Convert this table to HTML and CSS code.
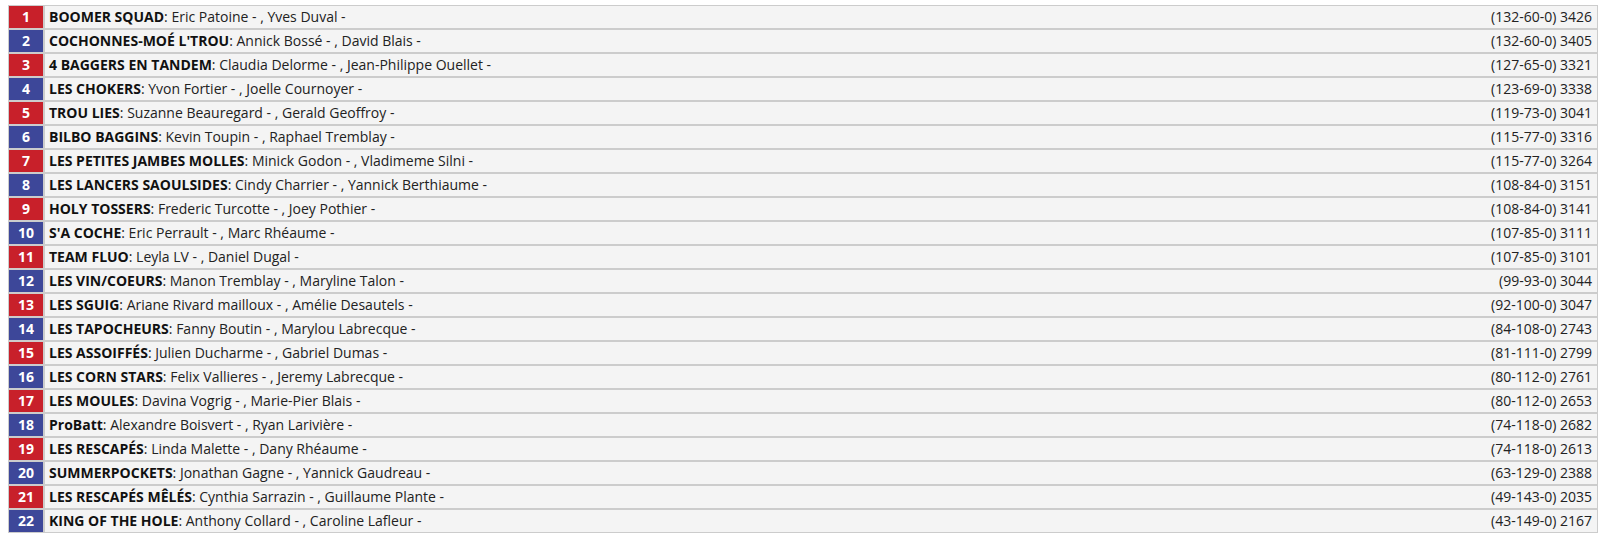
FILE: index.html
```html
<!DOCTYPE html>
<html lang="fr">
<head>
<meta charset="utf-8">
<title>Classement</title>
<link rel="stylesheet" href="styles.css">
</head>
<body>
<div class="board">
  <div class="row"><div class="rank odd">1</div><div class="info"><span class="team"><b>BOOMER SQUAD</b>: Eric Patoine - , Yves Duval -</span><span class="score">(132-60-0) 3426</span></div></div>
  <div class="row"><div class="rank even">2</div><div class="info"><span class="team"><b>COCHONNES-MOÉ L'TROU</b>: Annick Bossé - , David Blais -</span><span class="score">(132-60-0) 3405</span></div></div>
  <div class="row"><div class="rank odd">3</div><div class="info"><span class="team"><b>4 BAGGERS EN TANDEM</b>: Claudia Delorme - , Jean-Philippe Ouellet -</span><span class="score">(127-65-0) 3321</span></div></div>
  <div class="row"><div class="rank even">4</div><div class="info"><span class="team"><b>LES CHOKERS</b>: Yvon Fortier - , Joelle Cournoyer -</span><span class="score">(123-69-0) 3338</span></div></div>
  <div class="row"><div class="rank odd">5</div><div class="info"><span class="team"><b>TROU LIES</b>: Suzanne Beauregard - , Gerald Geoffroy -</span><span class="score">(119-73-0) 3041</span></div></div>
  <div class="row"><div class="rank even">6</div><div class="info"><span class="team"><b>BILBO BAGGINS</b>: Kevin Toupin - , Raphael Tremblay -</span><span class="score">(115-77-0) 3316</span></div></div>
  <div class="row"><div class="rank odd">7</div><div class="info"><span class="team"><b>LES PETITES JAMBES MOLLES</b>: Minick Godon - , Vladimeme Silni -</span><span class="score">(115-77-0) 3264</span></div></div>
  <div class="row"><div class="rank even">8</div><div class="info"><span class="team"><b>LES LANCERS SAOULSIDES</b>: Cindy Charrier - , Yannick Berthiaume -</span><span class="score">(108-84-0) 3151</span></div></div>
  <div class="row"><div class="rank odd">9</div><div class="info"><span class="team"><b>HOLY TOSSERS</b>: Frederic Turcotte - , Joey Pothier -</span><span class="score">(108-84-0) 3141</span></div></div>
  <div class="row"><div class="rank even">10</div><div class="info"><span class="team"><b>S'A COCHE</b>: Eric Perrault - , Marc Rhéaume -</span><span class="score">(107-85-0) 3111</span></div></div>
  <div class="row"><div class="rank odd">11</div><div class="info"><span class="team"><b>TEAM FLUO</b>: Leyla LV - , Daniel Dugal -</span><span class="score">(107-85-0) 3101</span></div></div>
  <div class="row"><div class="rank even">12</div><div class="info"><span class="team"><b>LES VIN/COEURS</b>: Manon Tremblay - , Maryline Talon -</span><span class="score">(99-93-0) 3044</span></div></div>
  <div class="row"><div class="rank odd">13</div><div class="info"><span class="team"><b>LES SGUIG</b>: Ariane Rivard mailloux - , Amélie Desautels -</span><span class="score">(92-100-0) 3047</span></div></div>
  <div class="row"><div class="rank even">14</div><div class="info"><span class="team"><b>LES TAPOCHEURS</b>: Fanny Boutin - , Marylou Labrecque -</span><span class="score">(84-108-0) 2743</span></div></div>
  <div class="row"><div class="rank odd">15</div><div class="info"><span class="team"><b>LES ASSOIFFÉS</b>: Julien Ducharme - , Gabriel Dumas -</span><span class="score">(81-111-0) 2799</span></div></div>
  <div class="row"><div class="rank even">16</div><div class="info"><span class="team"><b>LES CORN STARS</b>: Felix Vallieres - , Jeremy Labrecque -</span><span class="score">(80-112-0) 2761</span></div></div>
  <div class="row"><div class="rank odd">17</div><div class="info"><span class="team"><b>LES MOULES</b>: Davina Vogrig - , Marie-Pier Blais -</span><span class="score">(80-112-0) 2653</span></div></div>
  <div class="row"><div class="rank even">18</div><div class="info"><span class="team"><b>ProBatt</b>: Alexandre Boisvert - , Ryan Larivière -</span><span class="score">(74-118-0) 2682</span></div></div>
  <div class="row"><div class="rank odd">19</div><div class="info"><span class="team"><b>LES RESCAPÉS</b>: Linda Malette - , Dany Rhéaume -</span><span class="score">(74-118-0) 2613</span></div></div>
  <div class="row"><div class="rank even">20</div><div class="info"><span class="team"><b>SUMMERPOCKETS</b>: Jonathan Gagne - , Yannick Gaudreau -</span><span class="score">(63-129-0) 2388</span></div></div>
  <div class="row"><div class="rank odd">21</div><div class="info"><span class="team"><b>LES RESCAPÉS MÊLÉS</b>: Cynthia Sarrazin - , Guillaume Plante -</span><span class="score">(49-143-0) 2035</span></div></div>
  <div class="row"><div class="rank even">22</div><div class="info"><span class="team"><b>KING OF THE HOLE</b>: Anthony Collard - , Caroline Lafleur -</span><span class="score">(43-149-0) 2167</span></div></div>
</div>
</body>
</html>
```

FILE: styles.css
```css
html, body {
  margin: 0;
  padding: 0;
  background: #ffffff;
}

body {
  font-family: "Open Sans", "Liberation Sans", sans-serif;
  font-size: 14px;
  color: #222222;
}

.board {
  width: 1590px;
  margin: 5px 0 0 8px;
  display: flex;
  flex-direction: column;
}

.row {
  display: flex;
  height: 24px;
}

.rank {
  width: 34px;
  border: 1px solid #cccccc;
  color: #ffffff;
  font-weight: 700;
  display: flex;
  align-items: center;
  justify-content: center;
  line-height: 22px;
}

.rank.odd {
  background: #c8202a;
}

.rank.even {
  background: #3d4799;
}

.info {
  flex: 1;
  border: 1px solid #cccccc;
  background: #f4f4f4;
  display: flex;
  align-items: center;
  justify-content: space-between;
  padding: 0 5px 0 4px;
  line-height: 22px;
  white-space: nowrap;
}

.team b {
  font-weight: 700;
  color: #111111;
}
```
